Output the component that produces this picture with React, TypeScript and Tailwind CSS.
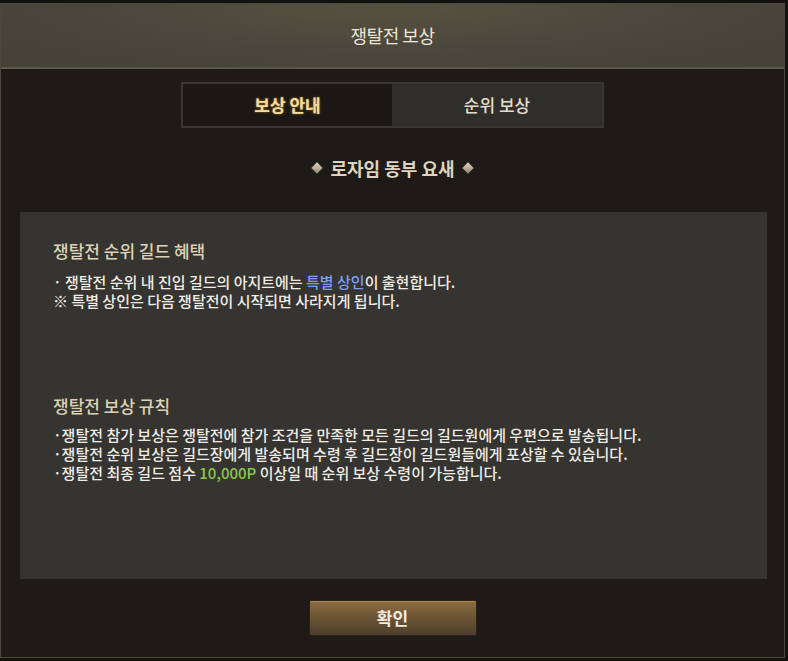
export default function App() {
  const font = { fontFamily: '"Noto Sans CJK KR", "Noto Sans", sans-serif' }

  return (
    <div className="w-[788px] h-[661px] bg-[#13120f] pt-[3px] pr-[3px] pb-[3px]" style={font}>
      <div className="h-full flex flex-col border border-[#4d483b] bg-[#1d1a17]">
        {/* Header */}
        <div className="h-[65px] shrink-0 flex items-center justify-center border-b-2 border-[#5e5745] bg-[#49453c] bg-[radial-gradient(ellipse_at_50%_0%,#57523f_0%,#4a463c_55%,#44413a_100%)]">
          <span className="text-[18px] text-[#ece6d6] tracking-tight">쟁탈전 보상</span>
        </div>

        {/* Tabs */}
        <div className="mt-[13px] mx-auto w-[423px] h-[46px] flex border-2 border-[#3a3731]">
          <div className="w-[209px] flex items-center justify-center bg-[#1a1714]">
            <span className="text-[17px] font-bold text-[#f4dca2] [text-shadow:0_0_3px_#8c6a1e,0_0_1px_#8c6a1e]">
              보상 안내
            </span>
          </div>
          <div className="flex-1 flex items-center justify-center bg-[#302e2a]">
            <span className="text-[17px] font-medium text-[#e4ddcb]">순위 보상</span>
          </div>
        </div>

        {/* Location */}
        <div className="mt-[28px] h-[24px] flex items-center justify-center gap-[9px]">
          <div className="w-[8px] h-[8px] rotate-45 bg-[linear-gradient(135deg,#e2d8bc,#8f866d)]" />
          <span className="text-[18px] font-bold text-[#ddd5c0]">로자임 동부 요새</span>
          <div className="w-[8px] h-[8px] rotate-45 bg-[linear-gradient(135deg,#e2d8bc,#8f866d)]" />
        </div>

        {/* Content panel */}
        <div className="mt-[32px] ml-[19px] w-[747px] h-[367px] bg-[#353430] pl-[33px] pt-[28px]">
          <div className="text-[17px] leading-[22px] font-medium text-[#dcd3b6]">쟁탈전 순위 길드 혜택</div>
          <div className="mt-[10px] text-[15px] leading-[19px] font-medium text-[#efece6]">
            <p>
              · 쟁탈전 순위 내 진입 길드의 아지트에는 <span className="text-[#7f9ef0]">특별 상인</span>이 출현합니다.
            </p>
            <p>※ 특별 상인은 다음 쟁탈전이 시작되면 사라지게 됩니다.</p>
          </div>

          <div className="mt-[85px] text-[17px] leading-[22px] font-medium text-[#dcd3b6]">쟁탈전 보상 규칙</div>
          <div className="mt-[8px] text-[15px] leading-[19px] font-medium text-[#efece6]">
            <p>·쟁탈전 참가 보상은 쟁탈전에 참가 조건을 만족한 모든 길드의 길드원에게 우편으로 발송됩니다.</p>
            <p>·쟁탈전 순위 보상은 길드장에게 발송되며 수령 후 길드장이 길드원들에게 포상할 수 있습니다.</p>
            <p>
              ·쟁탈전 최종 길드 점수 <span className="text-[#8cc84b]">10,000P</span> 이상일 때 순위 보상 수령이 가능합니다.
            </p>
          </div>
        </div>

        {/* Confirm */}
        <div className="mt-[21px] flex justify-center">
          <button className="w-[168px] h-[36px] rounded-[2px] border border-[#2a2119] bg-[linear-gradient(180deg,#8c6b41_0%,#6b5434_50%,#4c3e2d_100%)] shadow-[inset_0_1px_0_#a8875a] text-[17px] font-bold text-[#f1ece2]">
            확인
          </button>
        </div>
      </div>
    </div>
  )
}
